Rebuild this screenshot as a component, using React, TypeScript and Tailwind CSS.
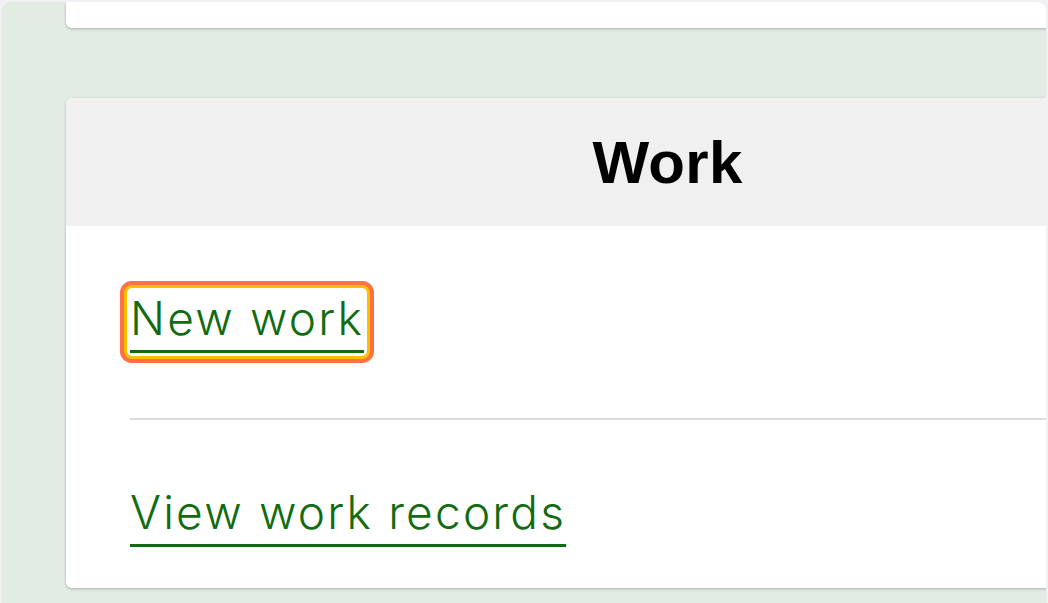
import React from "react";

export default function App() {
  return (
    <div className="w-[1048px] h-[603px] overflow-hidden bg-[#f1f1f5] px-[2px] pt-[2px]" style={{ fontFamily: '"Liberation Sans", Arial, sans-serif' }}>
      <div className="h-full w-full overflow-hidden rounded-t-[8px] bg-[#e2ece2] pl-[64px]">
        <div className="w-[1208px] h-[26px] bg-white rounded-b-[6px] shadow-[0_1px_3px_rgba(0,0,0,0.25)]" />
        <div className="mt-[70px] w-[1208px] h-[490px] bg-white rounded-[6px] overflow-hidden shadow-[0_1px_3px_rgba(0,0,0,0.25)] flex flex-col">
          <div className="h-[128px] bg-[#f0f0f0] flex items-center justify-center">
            <h2 className="text-[60px] font-bold leading-none text-black pt-[2px] -ml-[5px] tracking-[0.3px]">Work</h2>
          </div>
          <div className="flex-1 pl-[64px] flex flex-col font-['Inter',sans-serif]">
            <div className="h-[192px] pt-[62px]">
              <a className="inline-block -ml-[3px] pl-[3px] pr-[3px] pt-[2px] pb-[10px] rounded-[5px] bg-white text-[46px] font-[350] leading-[56px] tracking-[2.2px] text-[#116c11] underline decoration-[3px] underline-offset-[15px] shadow-[0_0_0_3px_#ffbf00,0_0_0_7px_#ff7043]">
                New work
              </a>
            </div>
            <div className="h-[2px] bg-[#dcdcdc]" />
            <div className="pt-[64px]">
              <a className="inline-block text-[46px] font-[350] leading-[56px] tracking-[2.2px] text-[#116c11] underline decoration-[3px] underline-offset-[15px]">
                View work records
              </a>
            </div>
          </div>
        </div>
      </div>
    </div>
  );
}
